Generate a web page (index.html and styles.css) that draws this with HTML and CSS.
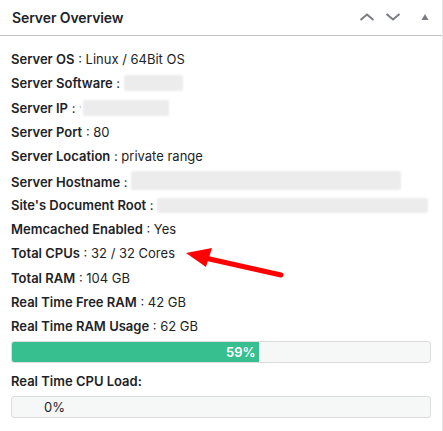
FILE: index.html
```html
<!DOCTYPE html>
<html lang="en">
<head>
    <meta charset="UTF-8">
    <meta name="viewport" content="width=device-width, initial-scale=1.0">
    <title>Server Overview</title>
    <link rel="stylesheet" href="styles.css">
</head>
<body>
    <div class="postbox">
        <div class="postbox-header">
            <h2>Server Overview</h2>
            <div class="handle-actions">
                <svg class="icon" width="16" height="10" viewBox="0 0 16 10">
                    <polyline points="1.5,8 8,2.5 14.5,8" fill="none" stroke="#787c82" stroke-width="2"/>
                </svg>
                <svg class="icon" width="16" height="10" viewBox="0 0 16 10">
                    <polyline points="1.5,2 8,7.5 14.5,2" fill="none" stroke="#787c82" stroke-width="2"/>
                </svg>
                <svg class="icon toggle" width="10" height="8" viewBox="0 0 10 8">
                    <polygon points="5,1 8.5,7 1.5,7" fill="#787c82"/>
                </svg>
            </div>
        </div>

        <div class="inside">
            <div class="row"><b>Server OS</b> : Linux / 64Bit OS</div>
            <div class="row"><b>Server Software</b> : <span class="redact w-software"></span></div>
            <div class="row"><b>Server IP</b> : <span class="tick">'</span><span class="redact w-ip"></span></div>
            <div class="row"><b>Server Port</b> : 80</div>
            <div class="row"><b>Server Location</b> : private range</div>
            <div class="row"><b>Server Hostname</b> : <span class="redact w-host"></span></div>
            <div class="row"><b>Site's Document Root</b> : <span class="redact w-root"></span></div>
            <div class="row"><b>Memcached Enabled</b> : Yes</div>
            <div class="row"><b>Total CPUs</b> : 32 / 32 Cores</div>
            <div class="row"><b>Total RAM</b> : 104 GB</div>
            <div class="row"><b>Real Time Free RAM</b> : 42 GB</div>
            <div class="row"><b>Real Time RAM Usage</b> : 62 GB</div>

            <div class="progress ram">
                <div class="progress-bar" style="width: 59%">59%</div>
            </div>

            <div class="row load-label"><b>Real Time CPU Load:</b></div>

            <div class="progress cpu">
                <div class="progress-empty">0%</div>
            </div>
        </div>

        <!-- annotation arrow -->
        <svg class="arrow" width="443" height="431" viewBox="0 0 443 431">
            <line x1="205" y1="258" x2="281" y2="275" stroke="#ff0000" stroke-width="5" stroke-linecap="round"/>
            <polygon points="186,253 212,248 206,267" fill="#ff0000"/>
        </svg>
    </div>
</body>
</html>
```

FILE: styles.css
```css
body {
    margin: 0;
    background: #fff;
    font-family: Inter, "Noto Sans", sans-serif;
    color: #1d2327;
}
.postbox {
    position: relative;
    width: 442px;
    height: 431px;
    border-right: 1px solid #e6e6e6;
    background: #fff;
}
.postbox-header {
    display: flex;
    align-items: center;
    justify-content: space-between;
    height: 35px;
    padding: 0 12px;
    border-bottom: 1px solid #c3c4c7;
}
.postbox-header h2 {
    margin: 0;
    font-size: 14px;
    font-weight: 600;
    letter-spacing: -0.1px;
}
.handle-actions {
    display: flex;
    align-items: center;
    margin-top: -1px;
}
.handle-actions .icon {
    margin-left: 10px;
}
.handle-actions .toggle {
    margin-left: 19px;
    margin-right: 0;
}
.inside {
    display: flex;
    flex-direction: column;
    gap: 6.3px;
    padding: 14px 11px 0 11px;
    font-size: 13px;
}
.row {
    line-height: 18px;
    height: 18px;
    white-space: nowrap;
}
.row b {
    font-weight: 600;
}
.redact {
    display: inline-block;
    height: 16px;
    vertical-align: -3px;
    background: #ececec;
    border-radius: 2px;
    filter: blur(1.2px);
}
.tick {
    color: #bbb;
    font-size: 9px;
}
.w-software { width: 59px; }
.w-ip { width: 86px; margin-left: 1px; }
.w-host { width: 270px; height: 19px; }
.w-root { width: 271px; height: 15px; }
.progress {
    height: 20px;
    border: 1px solid #dcdcde;
    border-radius: 3px;
    background: #f6f7f7;
    overflow: hidden;
}
.ram {
    margin-top: -0.5px;
}
.progress-bar {
    height: 100%;
    background: #38bf8f;
    color: #fff;
    font-size: 13px;
    font-weight: 600;
    line-height: 20px;
    text-align: right;
    padding-right: 3px;
    box-sizing: border-box;
}
.load-label {
    margin-top: 2.5px;
}
.progress-empty {
    padding-left: 32px;
    font-size: 13px;
    line-height: 20px;
}
.arrow {
    position: absolute;
    left: 0;
    top: 0;
    pointer-events: none;
}
```
